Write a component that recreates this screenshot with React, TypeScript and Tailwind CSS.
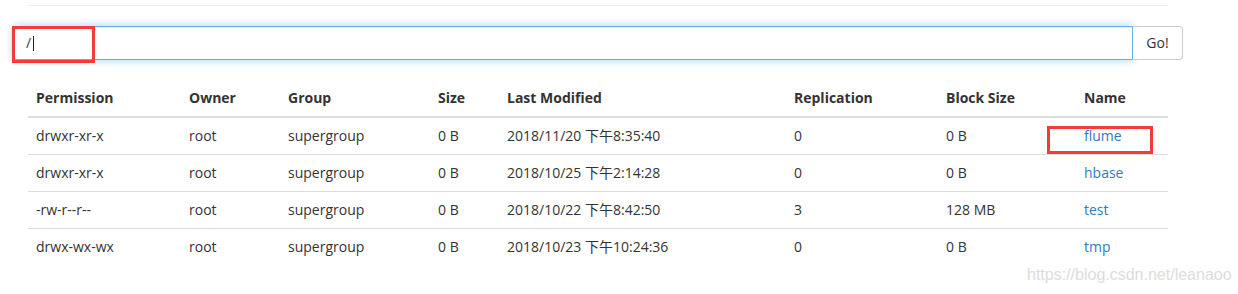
import React from "react";

const rows = [
  ["drwxr-xr-x", "root", "supergroup", "0 B", "2018/11/20 下午8:35:40", "0", "0 B", "flume"],
  ["drwxr-xr-x", "root", "supergroup", "0 B", "2018/10/25 下午2:14:28", "0", "0 B", "hbase"],
  ["-rw-r--r--", "root", "supergroup", "0 B", "2018/10/22 下午8:42:50", "3", "128 MB", "test"],
  ["drwx-wx-wx", "root", "supergroup", "0 B", "2018/10/23 下午10:24:36", "0", "0 B", "tmp"],
];

const headers = ["Permission", "Owner", "Group", "Size", "Last Modified", "Replication", "Block Size", "Name"];
const widths = ["w-[153px]", "w-[99px]", "w-[150px]", "w-[69px]", "w-[287px]", "w-[152px]", "w-[138px]", "w-[92px]"];

export default function App() {
  return (
    <div className="relative w-[1238px] h-[294px] bg-white text-[14px] text-[#333] font-['Open_Sans','Noto_Sans_CJK_SC',sans-serif] overflow-hidden">
      <div className="pt-[5px] pl-[28px]">
        <div className="w-[1140px] border-t border-[#eee]" />
      </div>

      <div className="relative mt-[20px] ml-[13px] w-[1170px] flex h-[34px]">
        <div className="flex-1 h-[34px] border border-[#66afe9] rounded-l-[4px] rounded-r-none shadow-[inset_0_1px_1px_rgba(0,0,0,0.075),0_0_8px_rgba(102,175,233,0.6)] flex items-center pl-[12px]">
          <span className="leading-[20px]">/</span>
          <span className="ml-[2px] w-px h-[15px] bg-[#222]" />
        </div>
        <button className="w-[50px] h-[34px] border border-l-0 border-[#ccc] rounded-r-[4px] bg-white text-[#333] leading-[20px]">
          Go!
        </button>
        <div className="absolute left-[-1px] top-0 w-[83px] h-[37px] border-[3px] border-[#f43b3b]" />
      </div>

      <div className="mt-[20px] ml-[28px] w-[1140px]">
        <table className="w-[1140px] border-collapse table-fixed">
          <thead>
            <tr>
              {headers.map((h, i) => (
                <th key={h} className={`${widths[i]} text-left font-bold px-[8px] py-[8px] leading-[20px] border-b-2 border-[#ddd]`}>
                  {h}
                </th>
              ))}
            </tr>
          </thead>
          <tbody>
            {rows.map((r, ri) => (
              <tr key={ri}>
                {r.map((c, ci) => (
                  <td
                    key={ci}
                    className={`px-[8px] py-[8px] leading-[20px] whitespace-nowrap ${ri > 0 ? "border-t border-[#ddd]" : ""}`}
                  >
                    {ci === 7 ? (
                      <span className="relative">
                        <a className="text-[#337ab7]">{c}</a>
                        {ri === 0 && (
                          <span className="absolute left-[-37px] top-0 w-[106px] h-[28px] border-[3px] border-[#f43b3b]" />
                        )}
                      </span>
                    ) : (
                      c
                    )}
                  </td>
                ))}
              </tr>
            ))}
          </tbody>
        </table>
      </div>

      <div className="absolute left-[1027px] top-[265px] text-[16px] text-[#dcdcdc] font-['Liberation_Sans',sans-serif] leading-[20px]">
        https://blog.csdn.net/leanaoo
      </div>
    </div>
  );
}
